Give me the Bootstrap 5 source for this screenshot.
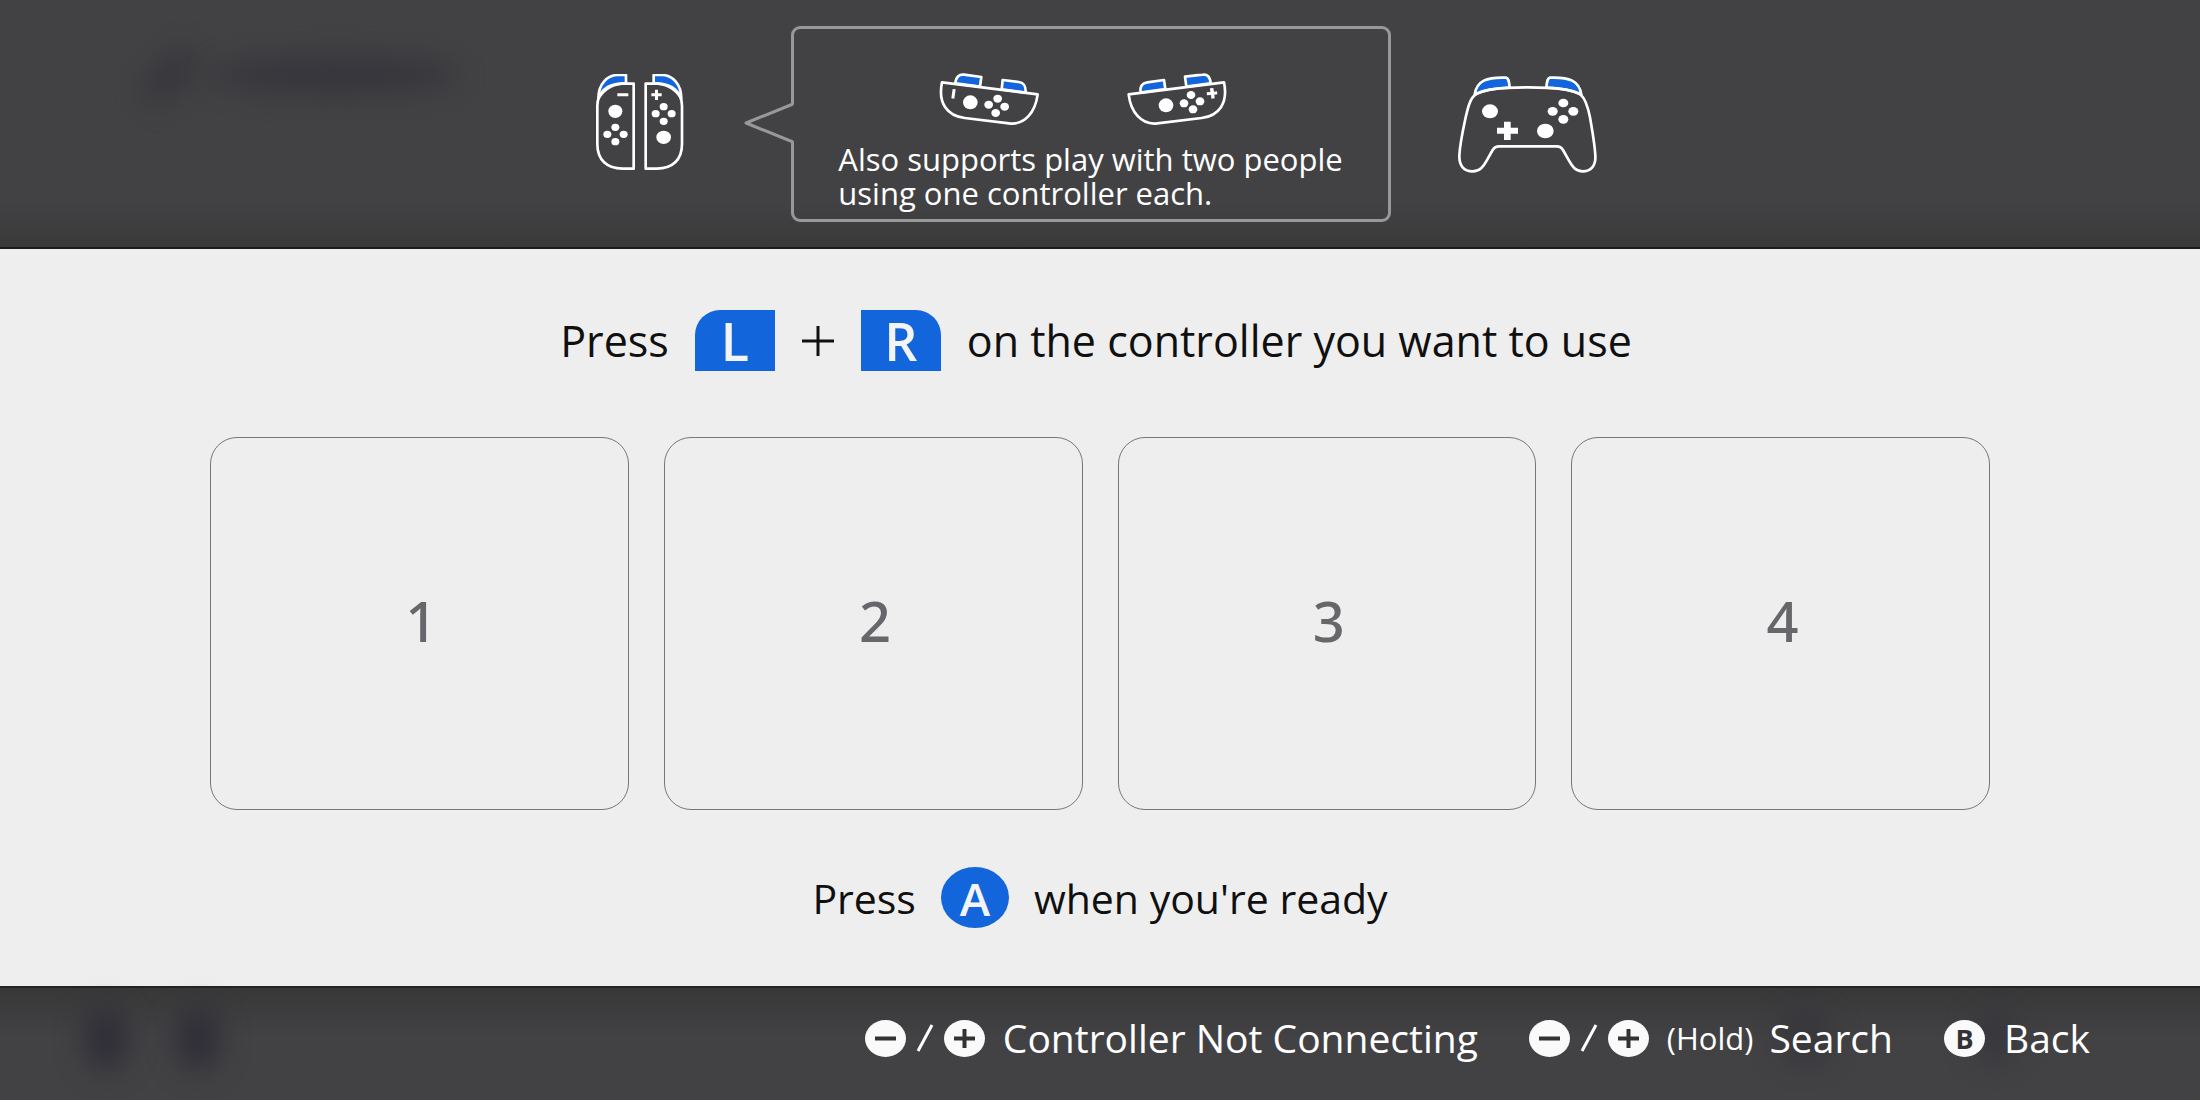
<!DOCTYPE html>
<html lang="en">
<head>
<meta charset="utf-8">
<meta name="viewport" content="width=device-width, initial-scale=1">
<title>Controllers</title>
<link href="https://cdn.jsdelivr.net/npm/bootstrap@5.3.0/dist/css/bootstrap.min.css" rel="stylesheet">
<style>
  :root { --key-blue: #1265db; --panel: #eeeeee; --shade: #424244; }
  body { font-family: "Open Sans", "Noto Sans", sans-serif; background: var(--shade); color: #101010; }
  svg { display: block; flex: none; }
  .line { fill: none; stroke: #fff; stroke-width: 8; stroke-linejoin: round; stroke-linecap: round; }
  .dots { fill: #fff; }
  .trigger { fill: var(--key-blue); stroke: #fff; stroke-width: 8; stroke-linejoin: round; }

  .top-band { height: 249px; padding-top: 26px; border-bottom: 2px solid #1c1c1c;
    background: linear-gradient(#424244 200px, #3a3a3b 246px); }
  .styles-row { gap: 65px; }
  .pair-icon { margin-right: 41px; }
  .bubble { width: 600px; height: 196px; border: 3px solid #989899; border-radius: 9px; padding-top: 43px; color: #fff; }
  .bubble-tip { top: 72px; left: -51px; }
  .bubble-icons { gap: 86px; }
  .bubble-text { font-size: 31px; line-height: 34px; margin-top: 16px; }

  .middle { background: var(--panel); padding: 61px 210px 58px; }
  .prompt { font-size: 43px; line-height: 60px; gap: 26px; }
  .prompt-small { font-size: 41px; gap: 25px; }
  .key { background: var(--key-blue); color: #f2f4f8; font-weight: 600; }
  .key-shoulder { width: 80px; height: 61px; font-size: 52px; }
  .key-l { border-top-left-radius: 25px; }
  .key-r { border-top-right-radius: 25px; }
  .key-a { width: 68px; height: 61px; border-radius: 50%; font-size: 46px; }
  .slots { --bs-gutter-x: 35px; padding-top: 9px; }
  .slot { height: 373px; border: 1px solid #77777a; border-radius: 27px; color: #67676b; font-family: "Noto Sans", sans-serif; font-size: 56px; font-weight: 500; }

  .bottom-band { height: 114px; border-top: 2px solid #242424; padding: 0 110px 12px 0;
    background: linear-gradient(#383839, #424244 50px); }
  .hints { gap: 51px; }
  .hint { color: #fff; font-size: 39px; line-height: 44px; }
  .hint-pair { gap: 10px; margin-right: 18px; }
  .hint-hold { font-size: 31px; margin-right: 16px; }
  .hint-b { width: 41px; height: 37px; border-radius: 50%; background: #fafafa; color: #333335; font-size: 27px; line-height: 37px; font-weight: 700; margin-right: 19px; }
  .ghost { background: #2f2d36; border-radius: 50%; filter: blur(14px); opacity: .6; }
  .ghost-title { left: 210px; top: 56px; width: 250px; height: 38px; }
  .ghost-mark { left: 136px; top: 60px; width: 68px; height: 32px; transform: rotate(-45deg); }
  .ghost-one { left: 84px; top: 20px; width: 44px; height: 62px; opacity: 1; }
  .ghost-two { left: 176px; top: 20px; width: 44px; height: 62px; opacity: 1; }
  .ghost-three { left: 1775px; top: 24px; width: 60px; height: 52px; opacity: .5; }
  .ghost-four { left: 1970px; top: 24px; width: 50px; height: 52px; opacity: .5; }
</style>
<script src="https://cdn.jsdelivr.net/npm/bootstrap@5.3.0/dist/js/bootstrap.bundle.min.js"></script>
</head>
<body class="d-flex flex-column min-vh-100">

<header class="top-band position-relative">
  <div class="ghost ghost-mark position-absolute"></div>
  <div class="ghost ghost-title position-absolute"></div>
  <div class="styles-row d-flex justify-content-center pe-2">
    <svg class="pair-icon mt-5" width="90" height="100" viewBox="48 42 270 300" role="img" aria-label="Two controllers">
      <path class="trigger" d="M58 116C58 72 84 45 118 45H141V70C104 70 76 84 58 116Z"/>
      <path class="trigger" d="M307 116C307 72 281 45 247 45H224V70C261 70 289 84 307 116Z"/>
      <path class="line" d="M164 71H128C84 71 55 98 55 138V252C55 300 84 326 130 326H164Z"/>
      <path class="line" d="M200 71H236C280 71 309 98 309 138V252C309 300 280 326 234 326H200Z"/>
      <g class="dots"><path d="M115 100H148V109H115ZM217 100H228V89H237V100H248V109H237V120H228V109H217Z"/>
      <ellipse cx="109" cy="154" rx="21" ry="20"/><ellipse cx="254" cy="232" rx="22" ry="20"/>
      <ellipse cx="109" cy="202" rx="12" ry="11"/><ellipse cx="109" cy="245" rx="12" ry="11"/><ellipse cx="85" cy="223" rx="12" ry="11"/><ellipse cx="134" cy="223" rx="12" ry="11"/>
      <ellipse cx="254" cy="140" rx="12" ry="11"/><ellipse cx="254" cy="184" rx="12" ry="11"/><ellipse cx="230" cy="161" rx="12" ry="11"/><ellipse cx="278" cy="161" rx="12" ry="11"/></g>
    </svg>

    <div class="bubble position-relative d-flex flex-column align-items-center">
      <svg class="bubble-tip position-absolute" width="52" height="44" viewBox="0 0 52 44" aria-hidden="true">
        <path d="M52 3L3 22L52 41Z" fill="#424244"/><path d="M50 3L3 22L50 41" fill="none" stroke="#989899" stroke-width="3" stroke-linejoin="round"/>
      </svg>
      <div class="bubble-icons d-flex pe-3">
        <svg width="102" height="54" viewBox="58 36 306 162" role="img" aria-label="Left controller held sideways">
          <path class="trigger" d="M110 70C112 50 122 42 136 44L188 51L184 80Z"/>
          <path class="trigger" d="M249 88L252 60L300 66C315 68 322 76 321 98Z"/>
          <path class="line" d="M70 67L357 103C350 156 319 196 271 190L138 174C86 167 57 130 70 67Z"/>
          <g class="dots"><path d="M102 87L111 88L107 116L98 115Z"/><ellipse cx="155" cy="127" rx="22" ry="21"/>
          <ellipse cx="237" cy="116" rx="13" ry="12"/><ellipse cx="210" cy="134" rx="13" ry="12"/><ellipse cx="258" cy="140" rx="13" ry="12"/><ellipse cx="231" cy="159" rx="13" ry="12"/></g>
        </svg>
        <svg width="102" height="54" viewBox="620 36 306 162" role="img" aria-label="Right controller held sideways">
          <path class="trigger" d="M664 98C661 78 669 69 684 67L734 60L738 87Z"/>
          <path class="trigger" d="M801 80L797 50L850 44C864 42 872 50 874 70Z"/>
          <path class="line" d="M914 67L628 103C634 156 666 196 714 190L847 174C899 167 927 130 914 67Z"/>
          <g class="dots"><path d="M872 85L882 84L884 95L893 94L894 103L885 104L886 115L876 116L875 105L863 106L862 97L873 96Z"/><ellipse cx="740" cy="136" rx="22" ry="21"/>
          <ellipse cx="815" cy="105" rx="13" ry="12"/><ellipse cx="794" cy="130" rx="13" ry="12"/><ellipse cx="842" cy="124" rx="13" ry="12"/><ellipse cx="821" cy="148" rx="13" ry="12"/></g>
        </svg>
      </div>
      <p class="bubble-text mb-0">Also supports play with two people<br>using one controller each.</p>
    </div>

    <svg class="mt-5" width="142" height="102" viewBox="48 42 426 306" role="img" aria-label="Pro controller">
      <path class="trigger" d="M104 104C110 62 140 51 198 53C207 55 207 66 209 83C165 84 132 90 104 104Z"/>
      <path class="trigger" d="M424 104C418 62 388 51 330 53C321 55 321 66 319 83C363 84 396 90 424 104Z"/>
      <path class="line" d="M264 82C190 82 130 86 106 104C90 116 84 142 77 172C68 214 60 250 58 286C57 318 72 334 98 334C120 334 130 320 140 302L158 270C163 261 168 259 178 259H350C360 259 364 261 369 270L387 302C397 320 407 334 428 334C452 334 468 318 466 286C464 250 457 214 450 172C444 142 437 116 422 104C398 86 338 82 264 82Z"/>
      <g class="dots"><ellipse cx="150" cy="154" rx="24" ry="21"/><ellipse cx="316" cy="213" rx="25" ry="22"/>
      <ellipse cx="370" cy="129" rx="15" ry="13"/><ellipse cx="370" cy="178" rx="15" ry="13"/><ellipse cx="338" cy="154" rx="15" ry="13"/><ellipse cx="400" cy="154" rx="15" ry="13"/>
      <path d="M192 185H212V203H234V221H212V240H192V221H171V203H192Z"/></g>
    </svg>
  </div>
</header>

<main class="middle flex-grow-1 d-flex flex-column justify-content-between">
  <div class="prompt d-flex justify-content-center align-items-center pe-2">
    <span>Press</span>
    <span class="key key-shoulder key-l d-flex justify-content-center align-items-center">L</span>
    <svg width="34" height="32" viewBox="0 0 34 32" role="img" aria-label="plus"><path d="M1 16H33M17 1V31" stroke="#101010" stroke-width="3"/></svg>
    <span class="key key-shoulder key-r d-flex justify-content-center align-items-center">R</span>
    <span>on the controller you want to use</span>
  </div>

  <div class="slots row">
    <div class="col"><div class="slot d-flex justify-content-center align-items-center ps-1 pb-2">1</div></div>
    <div class="col"><div class="slot d-flex justify-content-center align-items-center ps-1 pb-2">2</div></div>
    <div class="col"><div class="slot d-flex justify-content-center align-items-center ps-1 pb-2">3</div></div>
    <div class="col"><div class="slot d-flex justify-content-center align-items-center ps-1 pb-2">4</div></div>
  </div>

  <div class="prompt prompt-small d-flex justify-content-center align-items-center">
    <span>Press</span>
    <span class="key key-a d-flex justify-content-center align-items-center">A</span>
    <span>when you're ready</span>
  </div>
</main>

<footer class="bottom-band position-relative d-flex justify-content-end align-items-center">
  <div class="ghost ghost-one position-absolute"></div>
  <div class="ghost ghost-two position-absolute"></div>
  <div class="ghost ghost-three position-absolute"></div>
  <div class="ghost ghost-four position-absolute"></div>
  <div class="hints d-flex align-items-center position-relative">
    <button type="button" class="hint btn border-0 p-0 d-flex align-items-center">
      <span class="hint-pair d-flex align-items-center">
        <svg width="41" height="37" viewBox="0 0 41 37" aria-hidden="true"><ellipse cx="20.5" cy="18.5" rx="20.5" ry="18.5" fill="#fafafa"/><path d="M10 18.5H31" stroke="#333335" stroke-width="4"/></svg>
        <svg width="18" height="28" viewBox="0 0 18 28" aria-hidden="true"><path d="M2 27L16 1" stroke="#fff" stroke-width="3"/></svg>
        <svg width="41" height="37" viewBox="0 0 41 37" aria-hidden="true"><ellipse cx="20.5" cy="18.5" rx="20.5" ry="18.5" fill="#fafafa"/><path d="M10 18.5H31M20.5 9V28" stroke="#333335" stroke-width="4"/></svg>
      </span>
      <span>Controller Not Connecting</span>
    </button>
    <button type="button" class="hint btn border-0 p-0 d-flex align-items-center">
      <span class="hint-pair d-flex align-items-center">
        <svg width="41" height="37" viewBox="0 0 41 37" aria-hidden="true"><ellipse cx="20.5" cy="18.5" rx="20.5" ry="18.5" fill="#fafafa"/><path d="M10 18.5H31" stroke="#333335" stroke-width="4"/></svg>
        <svg width="18" height="28" viewBox="0 0 18 28" aria-hidden="true"><path d="M2 27L16 1" stroke="#fff" stroke-width="3"/></svg>
        <svg width="41" height="37" viewBox="0 0 41 37" aria-hidden="true"><ellipse cx="20.5" cy="18.5" rx="20.5" ry="18.5" fill="#fafafa"/><path d="M10 18.5H31M20.5 9V28" stroke="#333335" stroke-width="4"/></svg>
      </span>
      <span class="hint-hold">(Hold)</span>
      <span>Search</span>
    </button>
    <button type="button" class="hint btn border-0 p-0 d-flex align-items-center">
      <span class="hint-b">B</span>
      <span>Back</span>
    </button>
  </div>
</footer>
</body>
</html>
